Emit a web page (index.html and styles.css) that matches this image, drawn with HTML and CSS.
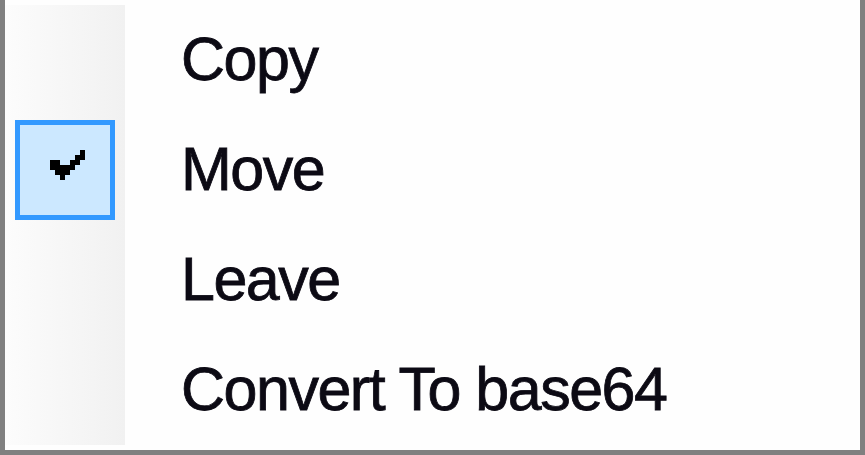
FILE: index.html
```html
<!DOCTYPE html>
<html lang="en">
<head>
<meta charset="utf-8">
<title>Context menu</title>
<link rel="stylesheet" href="styles.css">
</head>
<body>
<div class="menu">
  <ul class="items">
    <li class="item">
      <span class="gutter-cell"></span>
      <span class="label">Copy</span>
    </li>
    <li class="item">
      <span class="gutter-cell">
        <span class="check-box">
          <svg class="check" viewBox="0 0 7 6" width="35" height="30" shape-rendering="crispEdges" aria-hidden="true">
            <rect x="6" y="0" width="1" height="1"/>
            <rect x="5" y="1" width="2" height="1"/>
            <rect x="0" y="2" width="2" height="1"/>
            <rect x="4" y="2" width="2" height="1"/>
            <rect x="0" y="3" width="5" height="1"/>
            <rect x="1" y="4" width="3" height="1"/>
            <rect x="2" y="5" width="1" height="1"/>
          </svg>
        </span>
      </span>
      <span class="label">Move</span>
    </li>
    <li class="item">
      <span class="gutter-cell"></span>
      <span class="label">Leave</span>
    </li>
    <li class="item">
      <span class="gutter-cell"></span>
      <span class="label">Convert To base64</span>
    </li>
  </ul>
</div>
</body>
</html>
```
FILE: styles.css
```css
html, body {
  margin: 0;
  padding: 0;
  background: #fefefe;
}

.menu {
  width: 865px;
  height: 455px;
  box-sizing: border-box;
  background: #fefefe;
  border-left: 5px solid #808080;
  border-right: 5px solid #808080;
  border-bottom: 5px solid #808080;
  padding: 5px 0;
  font-family: "Liberation Sans", Arial, sans-serif;
}

.items {
  list-style: none;
  margin: 0;
  padding: 0;
  display: flex;
  flex-direction: column;
  background: linear-gradient(to right, #fcfcfc 0, #f1f1f1 120px, #fefefe 120px, #fefefe 100%);
}

.item {
  display: flex;
  align-items: stretch;
  height: 110px;
}

.gutter-cell {
  width: 120px;
  flex: 0 0 120px;
  display: flex;
  padding: 5px 10px;
  box-sizing: border-box;
}

.check-box {
  width: 100px;
  height: 100px;
  box-sizing: border-box;
  border: 5px solid #3399ff;
  background: #cce8ff;
}

.check {
  display: block;
  margin: 25px 0 0 30px;
  fill: #000;
}

.label {
  margin-left: 56px;
  font-size: 61px;
  line-height: 108px;
  letter-spacing: -1.5px;
  color: #0c0a14;
  -webkit-text-stroke: 0.8px #0c0a14;
  white-space: nowrap;
}
```
